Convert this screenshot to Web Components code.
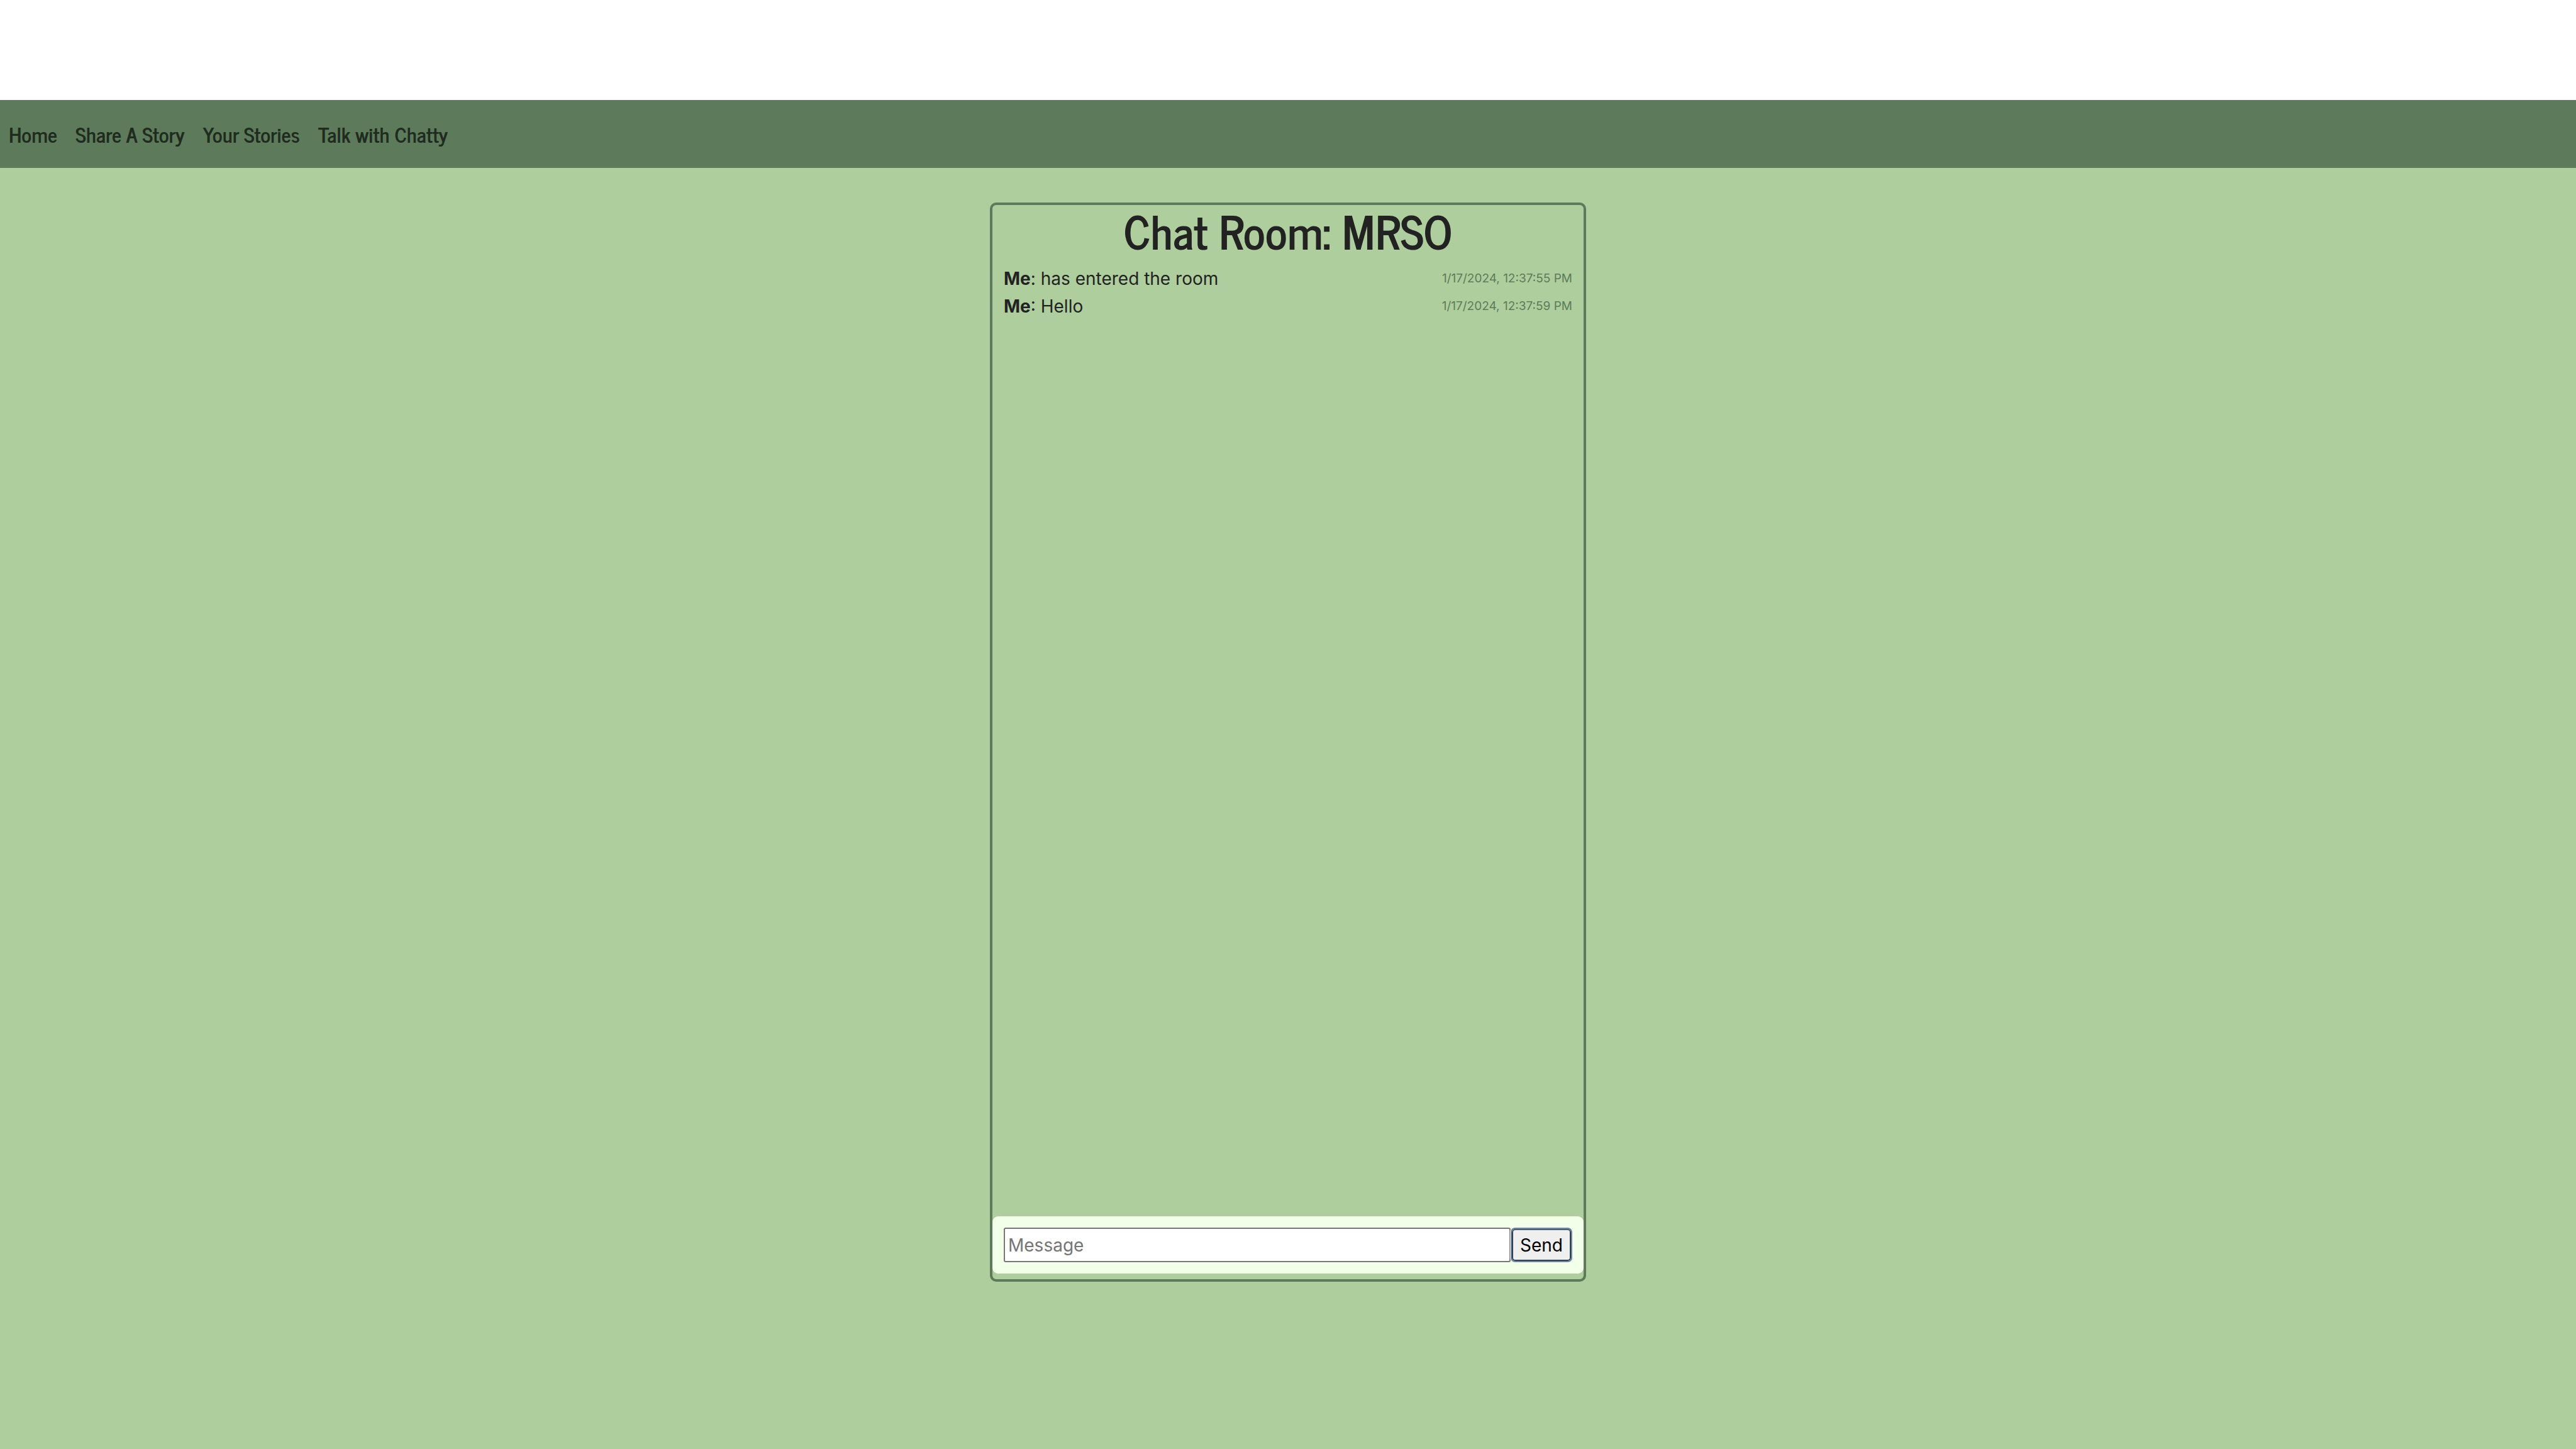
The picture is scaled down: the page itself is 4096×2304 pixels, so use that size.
<!DOCTYPE html>
<html lang="en">
<head>
<meta charset="utf-8">
<title>Chat Room</title>
<style>
  :root { --nav: #5d7b5a; --leaf: #aece9d; --mint: #f2ffe9; --ink: #222; --display: "News Cycle", "Liberation Sans Narrow", "Liberation Sans", sans-serif; }
  html, body { height: 100%; margin: 0; }
  body { font: 28px/44px Inter, "Noto Sans", sans-serif; color: var(--ink); background: #fff; }
</style>
</head>
<body>
<chat-app></chat-app>
<script>
const define = (name, html, setup) => customElements.define(name, class extends HTMLElement {
  connectedCallback() {
    if (this.shadowRoot) return;
    const root = this.attachShadow({ mode: 'open' });
    const tpl = document.createElement('template');
    tpl.innerHTML = html;
    root.append(tpl.content.cloneNode(true));
    if (setup) setup(this, root);
  }
});

define('nav-link', `
  <style>
    :host { display: block; }
    a { display: block; color: #202b20; text-decoration: none; font: 700 33px/44px var(--display); }
  </style>
  <a href="#"><slot></slot></a>`, (host, root) => {
    root.querySelector('a').href = host.getAttribute('href');
  });

define('site-nav', `
  <style>
    :host { display: block; background: var(--nav); }
    nav { display: flex; align-items: center; gap: 29px; height: 108px; padding: 0 14px; }
  </style>
  <nav aria-label="Main"><slot></slot></nav>`);

define('chat-message', `
  <style>
    :host { display: flex; justify-content: space-between; align-items: center; }
    p { margin: 0; }
    b { font-weight: 700; }
    time { font-size: 19px; color: var(--nav); }
  </style>
  <p><b></b>: <slot></slot></p><time></time>`, (host, root) => {
    root.querySelector('b').textContent = host.getAttribute('from');
    root.querySelector('time').textContent = host.getAttribute('time');
  });

define('message-form', `
  <style>
    :host { display: block; background: var(--mint); border-radius: 9px; padding: 18px; }
    form { display: flex; height: 55px; }
    input, button { box-sizing: border-box; margin: 0; font: inherit; outline: none; }
    input { flex: 1; min-width: 0; padding: 0 5px; border: 2px solid #767676; border-radius: 3px; background: #fff; color: #000; }
    input::placeholder { color: #757575; opacity: 1; }
    button { padding: 0 13px; border: 2px solid #72889a; border-radius: 7px; box-shadow: inset 0 2px #4c6177, inset 0 0 0 2px #2d4155, 0 0 0 1px #fff; background: #efefef; color: #000; line-height: 40px; }
  </style>
  <form onsubmit="return false"><input type="text" aria-label="Message" placeholder="Message"><button type="submit">Send</button></form>`);

define('chat-room', `
  <style>
    :host { display: flex; flex-direction: column; box-sizing: border-box; width: 948px; height: 1716px; margin: 55px auto 0; border: 4px solid var(--nav); border-radius: 10px; padding-bottom: 9px; }
    h1 { margin: 0 0 17px; text-align: center; font: 700 73px/78px var(--display); }
    section { flex: 1; padding: 0 18px; }
  </style>
  <h1></h1>
  <section aria-label="Messages"><slot></slot></section>
  <message-form></message-form>`, (host, root) => {
    root.querySelector('h1').textContent = 'Chat Room: ' + host.getAttribute('name');
  });

define('chat-app', `
  <style>
    :host { display: flex; flex-direction: column; min-height: 100%; box-sizing: border-box; padding-top: 159px; }
    main { flex: 1; background: var(--leaf); }
  </style>
  <site-nav>
    <nav-link href="#home">Home</nav-link>
    <nav-link href="#share">Share A Story</nav-link>
    <nav-link href="#stories">Your Stories</nav-link>
    <nav-link href="#chatty">Talk with Chatty</nav-link>
  </site-nav>
  <main>
    <chat-room name="MRSO">
      <chat-message from="Me" time="1/17/2024, 12:37:55 PM">has entered the room</chat-message>
      <chat-message from="Me" time="1/17/2024, 12:37:59 PM">Hello</chat-message>
    </chat-room>
  </main>`);
</script>
</body>
</html>
